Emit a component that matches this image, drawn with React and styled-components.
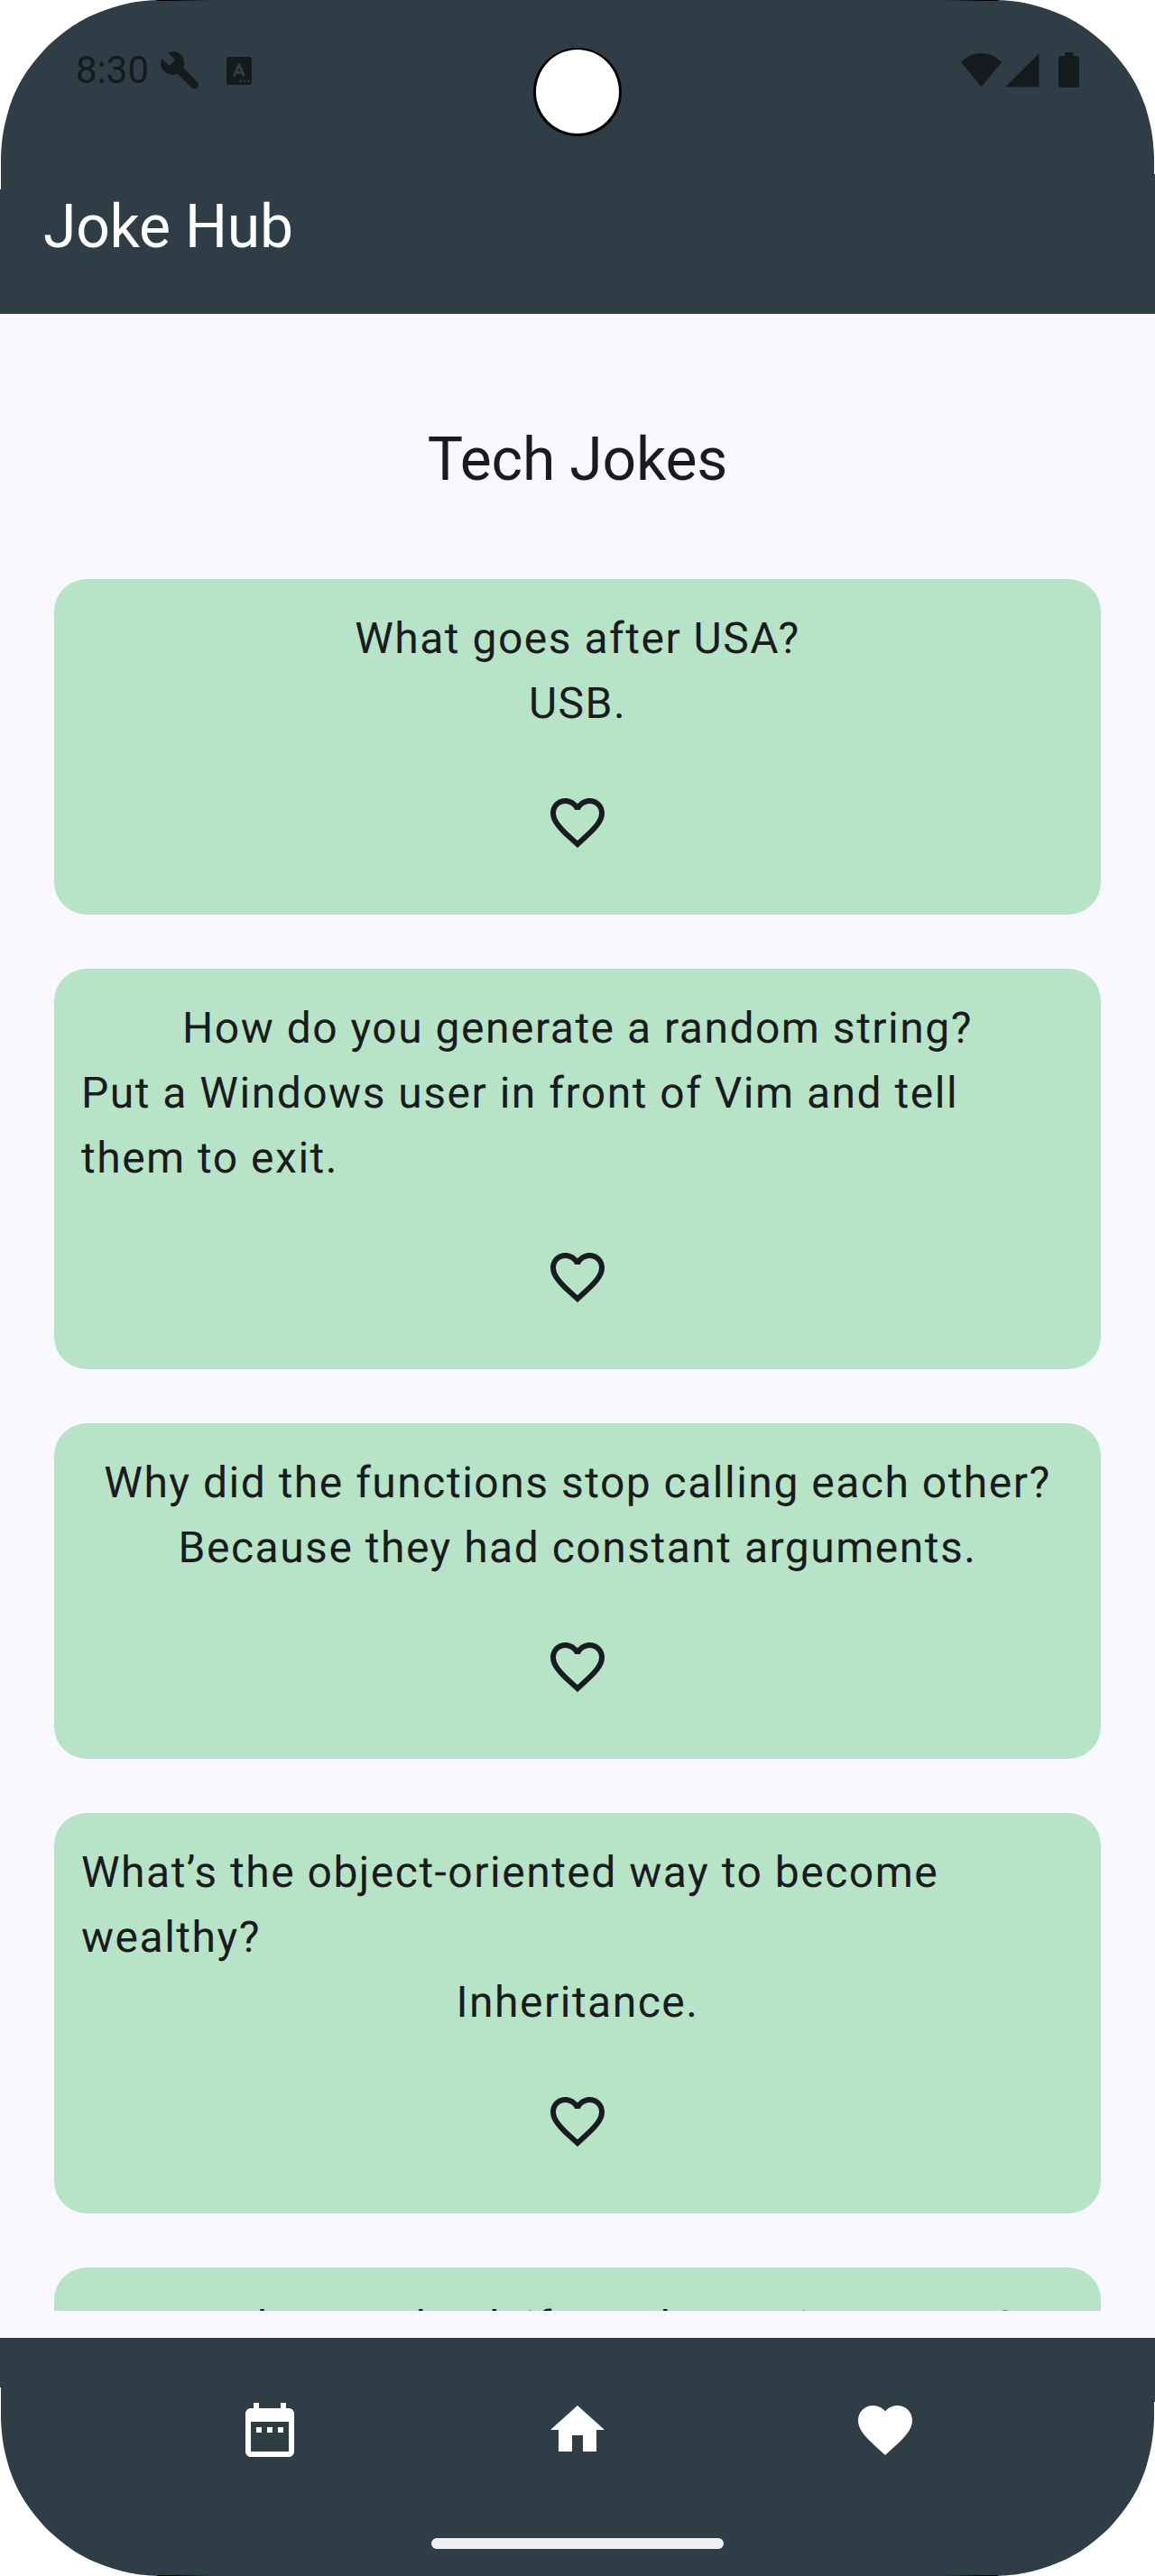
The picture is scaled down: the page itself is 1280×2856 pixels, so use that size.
import React from 'react';
import styled, { createGlobalStyle } from 'styled-components';

const colors = {
  slate: '#2f3e46',
  surface: '#faf8ff',
  mint: '#b7e4c7',
  ink: '#1a1b20',
  status: '#151a1d',
};

const SCREEN_PATH =
  'M0 210 H1 V174 C2 152 4 140 11 117 C20 92 30 76 52 52 C76 30 92 20 117 11 C138 4 150 1 174 0 ' +
  'H1106 C1130 1 1142 4 1163 11 C1188 20 1204 30 1228 52 C1250 76 1260 92 1269 117 C1276 140 1278 152 1279 174 V193 H1280 ' +
  'V2663 H1279 V2682 C1278 2704 1276 2716 1269 2739 C1260 2764 1250 2780 1228 2804 C1204 2826 1188 2836 1163 2845 C1142 2852 1130 2855 1103 2856 ' +
  'H177 C150 2855 138 2852 117 2845 C92 2836 76 2826 52 2804 C30 2780 20 2764 11 2739 C4 2716 2 2704 1 2682 V2647 H0 Z';

const GlobalStyle = createGlobalStyle`
  * { box-sizing: border-box; }
  body { margin: 0; background: #fff; }
`;

const Screen = styled.div`
  position: relative;
  display: flex;
  flex-direction: column;
  width: 1280px;
  height: 2856px;
  background: ${colors.surface};
  color: ${colors.ink};
  font-family: Roboto, 'Liberation Sans', sans-serif;
  clip-path: path('${SCREEN_PATH}');
`;

const BezelEdge = styled.div`
  position: absolute;
  left: 174px;
  right: 174px;
  height: 1px;
  ${(p) => (p.$side === 'top' ? 'top: 0;' : 'bottom: 0;')}
  background: linear-gradient(to right, #000 0, #000 12px, transparent 60px, transparent calc(100% - 60px), #000 calc(100% - 12px), #000 100%);
`;

const Camera = styled.div`
  position: absolute;
  top: 53px;
  left: 591px;
  width: 98px;
  height: 98px;
  border: 3px solid #000;
  border-top-width: 2px;
  border-radius: 50%;
  background: #fff;
`;

const Header = styled.header`
  background: ${colors.slate};
  height: 348px;
  flex: none;
`;

const StatusBar = styled.div`
  display: flex;
  align-items: center;
  justify-content: space-between;
  height: 156px;
  padding: 0 82px 0 84px;
  color: ${colors.status};
`;

const StatusGroup = styled.div`
  display: flex;
  align-items: center;
  svg { display: block; }
`;

const Clock = styled.span`
  width: 94px;
  font-size: 42px;
  line-height: 50px;
`;

const AppBar = styled.div`
  display: flex;
  align-items: center;
  height: 192px;
  padding: 0 48px;
`;

const AppTitle = styled.h1`
  margin: 0;
  font-size: 66px;
  line-height: 84px;
  letter-spacing: -0.25px;
  font-weight: 400;
  color: #fff;
`;

const Content = styled.main`
  flex: 1;
  min-height: 0;
  display: flex;
  flex-direction: column;
  align-items: center;
  padding: 120px 60px 30px;
`;

const SectionTitle = styled.h2`
  flex: none;
  margin: 0 0 90px;
  font-size: 66px;
  line-height: 84px;
  letter-spacing: -0.2px;
  font-weight: 400;
`;

const JokeList = styled.div`
  flex: 1;
  min-height: 0;
  width: 100%;
  overflow: hidden;
  display: flex;
  flex-direction: column;
  gap: 60px;
`;

const JokeCard = styled.article`
  flex: none;
  display: flex;
  flex-direction: column;
  align-items: center;
  padding: 30px;
  border-radius: 36px;
  background: ${colors.mint};
`;

const JokeLine = styled.p`
  margin: 0;
  font-size: 48px;
  line-height: 72px;
  letter-spacing: 1.5px;
  text-rendering: geometricPrecision;
`;

const IconButton = styled.button`
  display: flex;
  align-items: center;
  justify-content: center;
  width: 144px;
  height: 144px;
  margin-top: ${(p) => p.$top || 0}px;
  padding: 0;
  border: 0;
  background: none;
  color: inherit;
`;

const BottomBar = styled.footer`
  flex: none;
  height: 264px;
  padding: 30px;
  background: ${colors.slate};
  color: #fff;
  display: flex;
  flex-direction: column;
  justify-content: space-between;
  align-items: center;
`;

const NavRow = styled.nav`
  display: flex;
  justify-content: space-evenly;
  width: 100%;
`;

const GestureHandle = styled.div`
  width: 324px;
  height: 12px;
  border-radius: 6px;
  background: #eef0f0;
`;

const Icon = ({ d }) => (
  <svg width="72" height="72" viewBox="0 0 24 24" fill="currentColor" aria-hidden="true">
    <path d={d} />
  </svg>
);

const icons = {
  heartOutline:
    'M16.5 3c-1.74 0-3.41.81-4.5 2.09C10.91 3.81 9.24 3 7.5 3 4.42 3 2 5.42 2 8.5c0 3.78 3.4 6.86 8.55 11.54L12 21.35l1.45-1.32C18.6 15.36 22 12.28 22 8.5 22 5.42 19.58 3 16.5 3zm-4.4 15.55l-.1.1-.1-.1C7.14 14.24 4 11.39 4 8.5 4 6.5 5.5 5 7.5 5c1.54 0 3.04.99 3.57 2.36h1.87C13.46 5.99 14.96 5 16.5 5c2 0 3.5 1.5 3.5 3.5 0 2.89-3.14 5.74-7.9 10.05z',
  heart:
    'M12 21.35l-1.45-1.32C5.4 15.36 2 12.28 2 8.5 2 5.42 4.42 3 7.5 3c1.74 0 3.41.81 4.5 2.09C13.09 3.81 14.76 3 16.5 3 19.58 3 22 5.42 22 8.5c0 3.78-3.4 6.86-8.55 11.54L12 21.35z',
  home: 'M10 20v-6h4v6h5v-8h3L12 3 2 12h3v8z',
  calendar:
    'M9 11H7v2h2v-2zm4 0h-2v2h2v-2zm4 0h-2v2h2v-2zm2-7h-1V2h-2v2H8V2H6v2H5c-1.11 0-1.99.9-1.99 2L3 20c0 1.1.89 2 2 2h14c1.1 0 2-.9 2-2V6c0-1.1-.9-2-2-2zm0 16H5V9h14v11z',
};

const WrenchIcon = () => (
  <svg width="42" height="42" viewBox="0 0 42 42" aria-hidden="true">
    <path
      fill="currentColor"
      d="M8 1.300C14 -1 20.500 0.500 24 5.500C26.500 9.500 26.800 14 25.200 18.300L40.500 33.600C42.300 35.500 42.300 37.500 40.800 39.500C39 42 36.500 42.200 34.300 40.300L18.700 24.700C13 27.200 7 25.800 3 21.300C0 17.500 -0.500 12.500 1.500 8L9.500 16L16 9.500Z"
    />
  </svg>
);

const LetterTileIcon = () => (
  <svg width="28" height="31" viewBox="0 0 28 31" aria-hidden="true">
    <rect width="28" height="31" rx="3" fill="currentColor" />
    <path d="M8.700 20.500L13.800 8.500L19 20.500M10.800 17.500H17" fill="none" stroke={colors.slate} strokeWidth="3" strokeLinecap="round" strokeLinejoin="round" />
    <g fill={colors.slate}>
      <circle cx="16" cy="26.800" r="1.200" />
      <circle cx="20.300" cy="26.800" r="1.200" />
      <circle cx="24.600" cy="26.800" r="1.200" />
    </g>
  </svg>
);

const SignalIcons = () => (
  <svg width="133" height="40" viewBox="0 0 133 40" fill="currentColor" aria-hidden="true">
    <path d="M0 11C6 4.500 14 1 22.500 1S39 4.500 45 11L22.500 38.500Z" />
    <path d="M49 38.500L86.500 1V38.500Z" />
    <path d="M115 0h9.500v4h3.500a3 3 0 0 1 3 3v29a3 3 0 0 1-3 3h-17a3 3 0 0 1-3-3V7a3 3 0 0 1 3-3h4z" />
  </svg>
);

const Tile = styled.span`
  margin-left: 31px;
`;

const jokes = [
  ['What goes after USA?', 'USB.'],
  ['How do you generate a random string?', 'Put a Windows user in front of Vim and tell them to exit.'],
  ['Why did the functions stop calling each other?', 'Because they had constant arguments.'],
  ['What’s the object-oriented way to become wealthy?', 'Inheritance.'],
  ['How do you check if a webpage is HTML5?'],
];

export default function App() {
  return (
    <>
      <GlobalStyle />
      <Screen>
        <Header>
          <StatusBar>
            <StatusGroup>
              <Clock>8:30</Clock>
              <WrenchIcon />
              <Tile><LetterTileIcon /></Tile>
            </StatusGroup>
            <StatusGroup><SignalIcons /></StatusGroup>
          </StatusBar>
          <AppBar><AppTitle>Joke Hub</AppTitle></AppBar>
        </Header>
        <Content>
          <SectionTitle>Tech Jokes</SectionTitle>
          <JokeList>
            {jokes.map((lines) => (
              <JokeCard key={lines[0]}>
                {lines.map((line) => (
                  <JokeLine key={line}>{line}</JokeLine>
                ))}
                <IconButton $top={24} aria-label="Favorite"><Icon d={icons.heartOutline} /></IconButton>
              </JokeCard>
            ))}
          </JokeList>
        </Content>
        <BottomBar>
          <NavRow>
            <IconButton aria-label="Daily"><Icon d={icons.calendar} /></IconButton>
            <IconButton aria-label="Home"><Icon d={icons.home} /></IconButton>
            <IconButton aria-label="Favorites"><Icon d={icons.heart} /></IconButton>
          </NavRow>
          <GestureHandle />
        </BottomBar>
        <Camera />
        <BezelEdge $side="top" />
        <BezelEdge $side="bottom" />
      </Screen>
    </>
  );
}
